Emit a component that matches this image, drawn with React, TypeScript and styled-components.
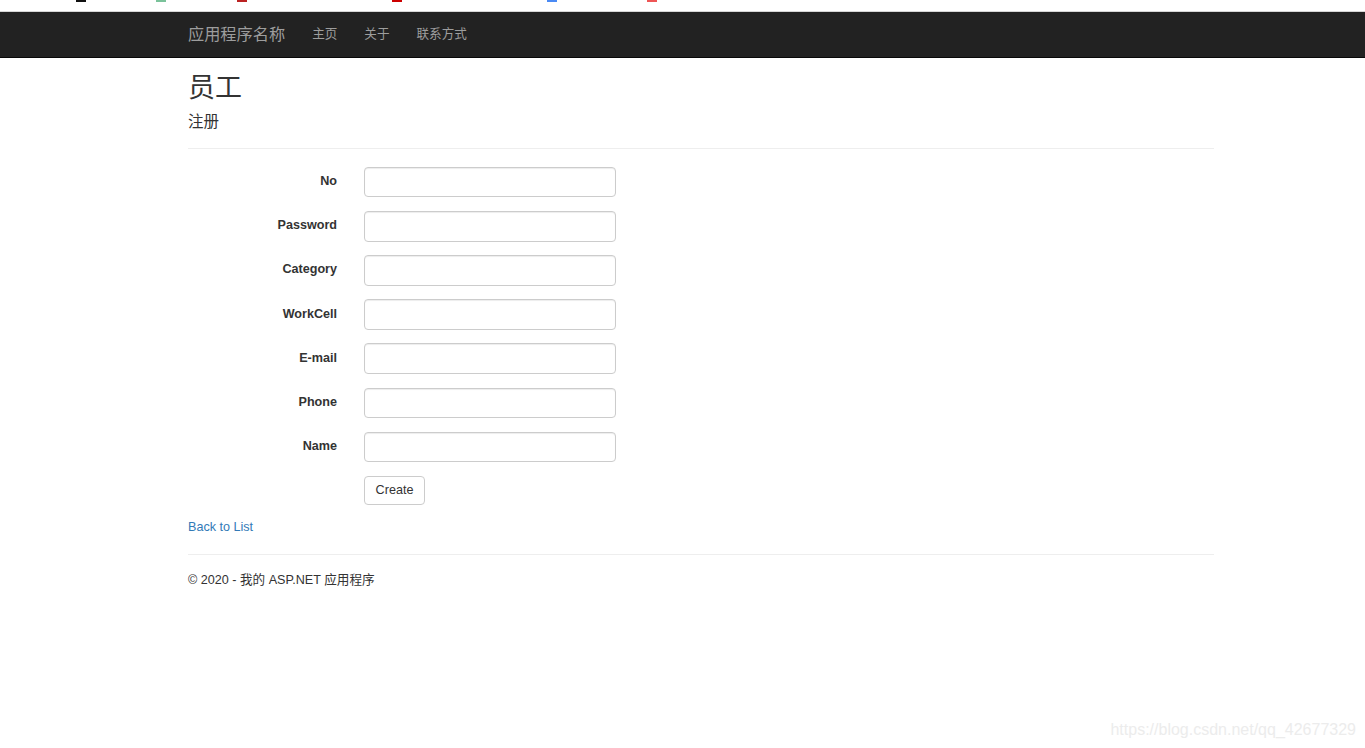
import React from "react";
import styled, { createGlobalStyle } from "styled-components";

const GlobalStyle = createGlobalStyle`
  html, body {
    margin: 0;
    padding: 0;
    background: #fff;
  }
  body {
    font-family: "Liberation Sans", Arial, "Noto Sans CJK SC", sans-serif;
    font-size: 12.6px;
    line-height: 1.42857;
    color: #333;
  }
  * {
    box-sizing: border-box;
  }
`;

const TopStrip = styled.div`
  height: 12px;
  background: #fff;
  border-bottom: 1px solid #d6d6d6;
  position: relative;
`;

const Fragment = styled.span<{ $color: string }>`
  position: absolute;
  top: 0;
  height: 2px;
  width: 10px;
  background: ${(p) => p.$color};
`;

const Navbar = styled.nav`
  height: 46px;
  background: #222;
  border-bottom: 1px solid #080808;
`;

const NavInner = styled.div`
  width: 1026px;
  margin-left: 188px;
  display: flex;
  align-items: center;
  height: 45px;
`;

const Brand = styled.a`
  font-family: "Liberation Sans", "Noto Sans CJK SC", sans-serif;
  font-size: 16.2px;
  font-weight: 400;
  color: #9d9d9d;
  text-decoration: none;
  margin-right: 27px;
`;

const NavLink = styled.a`
  font-family: "Liberation Sans", "Noto Sans CJK SC", sans-serif;
  font-size: 12.6px;
  color: #9d9d9d;
  text-decoration: none;
  margin-right: 27px;
`;

const Container = styled.main`
  width: 1026px;
  margin-left: 188px;
`;

const Title = styled.h2`
  font-family: "Liberation Sans", "Noto Sans CJK SC", sans-serif;
  font-weight: 400;
  font-size: 27px;
  line-height: 1.1;
  margin: 16px 0 9px;
  color: #333;
`;

const Subtitle = styled.h4`
  font-family: "Liberation Sans", "Noto Sans CJK SC", sans-serif;
  font-weight: 400;
  font-size: 15.5px;
  line-height: 1.1;
  margin: 0;
  color: #333;
`;

const Rule = styled.hr<{ $top: number; $bottom: number }>`
  border: 0;
  border-top: 1px solid #eee;
  margin: ${(p) => p.$top}px 0 ${(p) => p.$bottom}px;
`;

const Form = styled.form`
  display: flex;
  flex-direction: column;
  gap: 13.6px;
`;

const Row = styled.div`
  display: grid;
  grid-template-columns: 149px 252px;
  column-gap: 27px;
  align-items: center;
`;

const Label = styled.label`
  text-align: right;
  font-weight: bold;
  font-size: 12.6px;
  color: #333;
`;

const Input = styled.input`
  width: 252px;
  height: 30.6px;
  padding: 5px 11px;
  border: 1px solid #ccc;
  border-radius: 4px;
  box-shadow: inset 0 1px 1px rgba(0, 0, 0, 0.075);
  font-size: 12.6px;
  background: #fff;
`;

const Button = styled.button`
  grid-column: 2;
  justify-self: start;
  height: 29px;
  width: 61px;
  padding: 0 0 1px;
  border: 1px solid #ccc;
  border-radius: 4px;
  background: #fff;
  color: #333;
  font-family: "Liberation Sans", Arial, sans-serif;
  font-size: 12.6px;
`;

const BackLink = styled.a`
  display: inline-block;
  margin-top: 14px;
  color: #337ab7;
  text-decoration: none;
  font-size: 12.6px;
`;

const Footer = styled.footer`
  font-family: "Liberation Sans", "Noto Sans CJK SC", sans-serif;
  font-size: 12.6px;
  color: #333;
`;

const Watermark = styled.div`
  position: absolute;
  right: 9px;
  top: 719px;
  font-family: "Liberation Sans", Arial, sans-serif;
  font-size: 16px;
  color: #ececec;
`;

const Page = styled.div`
  position: relative;
  min-height: 748px;
`;

const fields = ["No", "Password", "Category", "WorkCell", "E-mail", "Phone", "Name"];

const fragments: [number, string][] = [
  [76, "#111"],
  [156, "#7ac29a"],
  [237, "#b22"],
  [392, "#c00"],
  [547, "#4a8af4"],
  [647, "#e55"],
];

export default function App() {
  return (
    <Page>
      <GlobalStyle />
      <TopStrip>
        {fragments.map(([x, c]) => (
          <Fragment key={x} $color={c} style={{ left: x }} />
        ))}
      </TopStrip>
      <Navbar>
        <NavInner>
          <Brand href="#">应用程序名称</Brand>
          <NavLink href="#">主页</NavLink>
          <NavLink href="#">关于</NavLink>
          <NavLink href="#">联系方式</NavLink>
        </NavInner>
      </Navbar>
      <Container>
        <Title>员工</Title>
        <Subtitle>注册</Subtitle>
        <Rule $top={18} $bottom={18} />
        <Form>
          {fields.map((f) => (
            <Row key={f}>
              <Label>{f}</Label>
              <Input type="text" />
            </Row>
          ))}
          <Row>
            <Button type="button">Create</Button>
          </Row>
        </Form>
        <BackLink href="#">Back to List</BackLink>
        <Rule $top={17} $bottom={17} />
        <Footer>© 2020 - 我的 ASP.NET 应用程序</Footer>
      </Container>
      <Watermark>https://blog.csdn.net/qq_42677329</Watermark>
    </Page>
  );
}
